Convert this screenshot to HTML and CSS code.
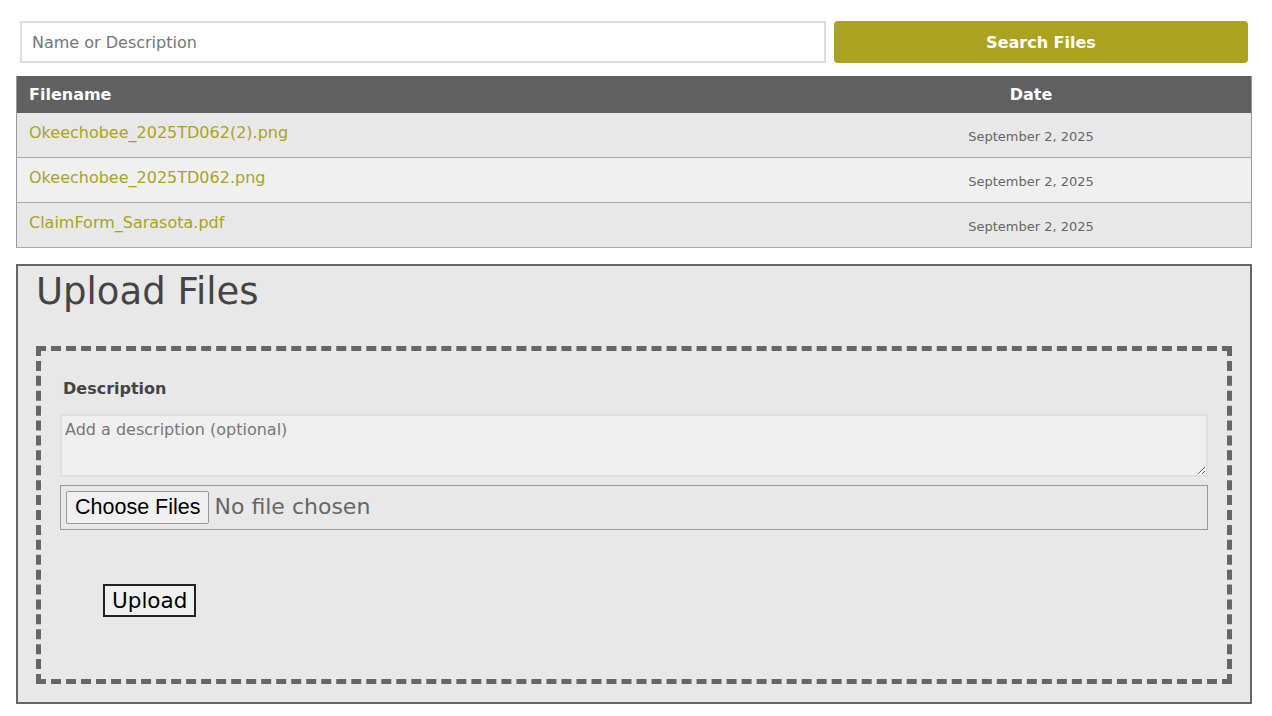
FILE: index.html
```html
<!DOCTYPE html>
<html lang="en">

<head>
    <meta charset="UTF-8">
    <meta name="viewport" content="width=device-width, initial-scale=1.0">
    <title>Files</title>
    <link rel="stylesheet" href="styles.css">
</head>

<body>
    <div class="page">
        <form class="search">
            <input type="text" class="search-input" placeholder="Name or Description">
            <button type="button" class="search-btn">Search Files</button>
        </form>

        <table class="files">
            <thead>
                <tr>
                    <th class="col-name">Filename</th>
                    <th class="col-date">Date</th>
                </tr>
            </thead>
            <tbody>
                <tr>
                    <td class="col-name"><a href="#">Okeechobee_2025TD062(2).png</a></td>
                    <td class="col-date">September 2, 2025</td>
                </tr>
                <tr>
                    <td class="col-name"><a href="#">Okeechobee_2025TD062.png</a></td>
                    <td class="col-date">September 2, 2025</td>
                </tr>
                <tr>
                    <td class="col-name"><a href="#">ClaimForm_Sarasota.pdf</a></td>
                    <td class="col-date">September 2, 2025</td>
                </tr>
            </tbody>
        </table>

        <div class="upload">
            <h1>Upload Files</h1>
            <div class="dropzone">
                <label class="desc-label" for="desc">Description</label>
                <textarea id="desc" class="desc" placeholder="Add a description (optional)"></textarea>
                <div class="file-box">
                    <input type="file" multiple class="file-input">
                </div>
                <button type="button" class="upload-btn">Upload</button>
            </div>
        </div>
    </div>
</body>

</html>
```

FILE: styles.css
```css
body {
    margin: 0;
    padding: 16px 20px 16px 16px;
    font-family: "DejaVu Sans", Verdana, sans-serif;
    background: #fff;
}

.page {
    display: flex;
    flex-direction: column;
}

.search {
    display: flex;
    gap: 8px;
    margin: 5px 4px 13px 4px;
}

.search-input {
    flex: 1;
    height: 42px;
    box-sizing: border-box;
    border: 2px solid #ddd;
    padding: 0 10px;
    font-family: inherit;
    font-size: 16px;
    color: #333;
}

.search-input::placeholder {
    color: #757575;
}

.search-btn {
    width: 414px;
    height: 42px;
    border: none;
    border-radius: 4px;
    background: #aba31f;
    color: #fff;
    font-family: inherit;
    font-size: 16px;
    font-weight: bold;
}

.files {
    width: 100%;
    border-collapse: collapse;
    border-left: 1px solid #999;
    border-right: 1px solid #999;
}

.files th {
    background: #606060;
    color: #fff;
    font-size: 16px;
    height: 37px;
    padding: 0 12px;
}

.files th.col-name {
    text-align: left;
}

.files td {
    padding: 0 12px;
    border-bottom: 1px solid #aaa;
    vertical-align: top;
}

.files tbody tr:nth-child(odd) {
    background: #e8e8e8;
}

.files tbody tr:nth-child(even) {
    background: #f0f0f0;
}

.files td.col-name {
    padding-top: 10px;
    padding-bottom: 15px;
    line-height: 19px;
}

.files a {
    color: #aba31f;
    text-decoration: none;
    font-size: 16px;
}

.files .col-date {
    width: 416px;
    text-align: center;
}

.files td.col-date {
    font-size: 13px;
    color: #666;
    padding-top: 16px;
    line-height: 15px;
}

.upload {
    margin-top: 16px;
    border: 2px solid #666;
    background: #e8e8e8;
    padding: 0 18px 18px 18px;
}

.upload h1 {
    margin: 4px 0 32px 0;
    font-size: 37px;
    font-weight: normal;
    color: #444;
    line-height: 44px;
}

.dropzone {
    border: 5px dashed #666;
    padding: 28px 19px 62px 19px;
    display: flex;
    flex-direction: column;
    align-items: flex-start;
}

.desc-label {
    font-weight: bold;
    font-size: 16px;
    color: #444;
    margin: 0 0 16px 3px;
}

.desc {
    width: 100%;
    height: 63px;
    box-sizing: border-box;
    background: #efefef;
    border: 2px solid #e0e0e0;
    padding: 4px 3px;
    font-family: inherit;
    font-size: 16px;
    margin-bottom: 8px;
}

.desc::placeholder {
    color: #777;
}

.file-box {
    width: 100%;
    box-sizing: border-box;
    border: 1px solid #999;
    padding: 5px;
}

.file-input {
    font-family: inherit;
    font-size: 22px;
    color: #666;
}

.file-input::file-selector-button {
    font-family: "Liberation Sans", Arial, sans-serif;
    font-size: 21.5px;
    color: #000;
    padding: 3px 8px;
    margin-right: 5px;
    border: 1px solid #999;
    border-radius: 2px;
    background: #f0f0f0;
}

.upload-btn {
    margin: 54px 0 0 43px;
    font-family: inherit;
    font-size: 21.5px;
    padding: 2px 7px;
    border: 2px solid #222;
    background: #f0f0f0;
    color: #000;
}
```
